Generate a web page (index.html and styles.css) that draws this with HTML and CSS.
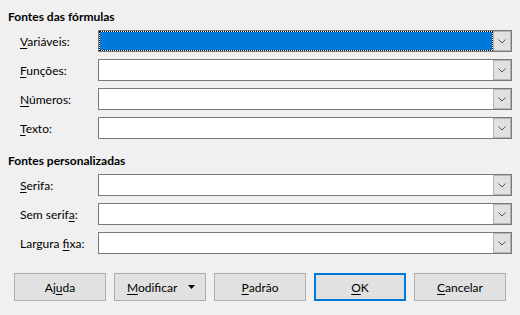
FILE: index.html
```html
<!DOCTYPE html>
<html lang="pt">
<head>
<meta charset="utf-8">
<title>Fontes</title>
<link rel="stylesheet" href="styles.css">
</head>
<body>
<div class="dialog">
  <section class="group">
    <div class="group-title">Fontes das fórmulas</div>
    <div class="rows">
      <span class="lbl"><u>V</u>ariáveis:</span>
      <div class="combo focus"><span class="value"></span><span class="drop"><svg width="8" height="5" viewBox="0 0 8 5"><polyline points="0.5,0.5 4,4 7.5,0.5" fill="none" stroke="#555" stroke-width="1"/></svg></span></div>
      <span class="lbl"><u>F</u>unções:</span>
      <div class="combo"><span class="value"></span><span class="drop"><svg width="8" height="5" viewBox="0 0 8 5"><polyline points="0.5,0.5 4,4 7.5,0.5" fill="none" stroke="#555" stroke-width="1"/></svg></span></div>
      <span class="lbl"><u>N</u>úmeros:</span>
      <div class="combo"><span class="value"></span><span class="drop"><svg width="8" height="5" viewBox="0 0 8 5"><polyline points="0.5,0.5 4,4 7.5,0.5" fill="none" stroke="#555" stroke-width="1"/></svg></span></div>
      <span class="lbl"><u>T</u>exto:</span>
      <div class="combo"><span class="value"></span><span class="drop"><svg width="8" height="5" viewBox="0 0 8 5"><polyline points="0.5,0.5 4,4 7.5,0.5" fill="none" stroke="#555" stroke-width="1"/></svg></span></div>
    </div>
  </section>
  <section class="group">
    <div class="group-title">Fontes personalizadas</div>
    <div class="rows">
      <span class="lbl"><u>S</u>erifa:</span>
      <div class="combo"><span class="value"></span><span class="drop"><svg width="8" height="5" viewBox="0 0 8 5"><polyline points="0.5,0.5 4,4 7.5,0.5" fill="none" stroke="#555" stroke-width="1"/></svg></span></div>
      <span class="lbl">Sem serif<u>a</u>:</span>
      <div class="combo"><span class="value"></span><span class="drop"><svg width="8" height="5" viewBox="0 0 8 5"><polyline points="0.5,0.5 4,4 7.5,0.5" fill="none" stroke="#555" stroke-width="1"/></svg></span></div>
      <span class="lbl">Largura <u>f</u>ixa:</span>
      <div class="combo"><span class="value"></span><span class="drop"><svg width="8" height="5" viewBox="0 0 8 5"><polyline points="0.5,0.5 4,4 7.5,0.5" fill="none" stroke="#555" stroke-width="1"/></svg></span></div>
    </div>
  </section>
  <div class="buttons">
    <button class="btn">Aj<u>u</u>da</button>
    <button class="btn menu"><span><u>M</u>odificar</span><svg width="7" height="4" viewBox="0 0 7 4"><polygon points="0,0 7,0 3.5,4" fill="#000"/></svg></button>
    <button class="btn"><u>P</u>adrão</button>
    <button class="btn default"><u>O</u>K</button>
    <button class="btn"><u>C</u>ancelar</button>
  </div>
</div>
</body>
</html>
```
FILE: styles.css
```css
html, body {
  margin: 0;
  padding: 0;
}
body {
  width: 520px;
  height: 315px;
  overflow: hidden;
  background: #f0f0f0;
  color: #000;
  font-family: Lato, "Noto Sans", sans-serif;
  font-size: 12px;
}
.dialog {
  padding: 8px 8px 0 8px;
}
.group + .group {
  margin-top: 13px;
}
.group-title {
  font-weight: bold;
  height: 18px;
  line-height: 18px;
  margin-bottom: 4px;
}
.rows {
  display: grid;
  grid-template-columns: 78px 414px;
  grid-auto-rows: 22px;
  row-gap: 7px;
  padding-left: 12px;
}
.lbl {
  display: block;
  line-height: 24px;
  white-space: nowrap;
}
.lbl u, .btn u {
  text-underline-offset: 2px;
}
.combo {
  display: flex;
  box-sizing: border-box;
  height: 22px;
  border: 1px solid #7a7a7a;
  background: #fff;
}
.value {
  flex: 1;
}
.combo.focus .value {
  border: 1px dotted #000;
  background: linear-gradient(#0078d7, #0078d7) padding-box, #fff border-box;
}
.drop {
  box-sizing: border-box;
  width: 18px;
  height: 20px;
  border: 1px solid #b4b4b4;
  background: #e1e1e1;
  display: flex;
  align-items: center;
  justify-content: center;
}
.buttons {
  display: flex;
  gap: 8px;
  margin-top: 19px;
  padding-left: 6px;
}
.btn {
  box-sizing: border-box;
  width: 92px;
  height: 28px;
  margin: 0;
  padding: 0;
  border: 1px solid #adadad;
  background: #e1e1e1;
  font: inherit;
  color: #000;
  display: flex;
  align-items: center;
  justify-content: center;
}
.btn.menu {
  justify-content: space-between;
  padding: 0 10px 0 12px;
}
.btn.default {
  border: 2px solid #0078d7;
}
```
